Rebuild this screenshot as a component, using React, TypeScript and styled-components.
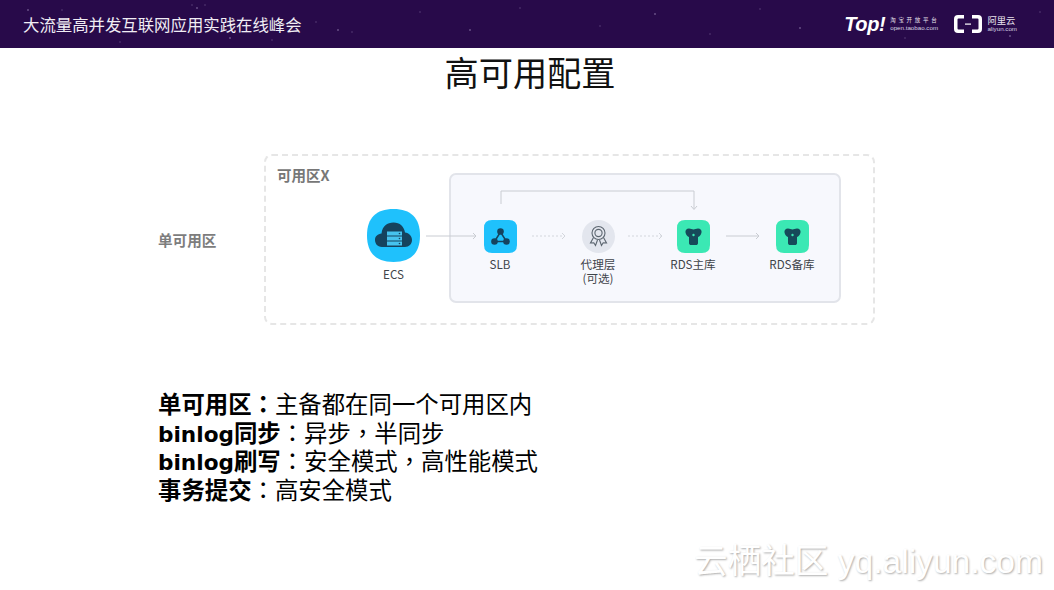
import styled, { createGlobalStyle } from 'styled-components';

const CJK = `"Noto Sans CJK SC", "Noto Sans", sans-serif`;

const GlobalStyle = createGlobalStyle`
  html, body {
    margin: 0;
    padding: 0;
    background: #fff;
  }
`;

const Slide = styled.div`
  position: relative;
  width: 1054px;
  height: 590px;
  overflow: hidden;
  background: #fff;
  font-family: ${CJK};
`;

const stars = [
  [28, 10], [62, 10], [192, 5], [197, 8], [205, 5], [316, 22], [338, 30], [352, 32],
  [170, 32], [230, 38], [272, 40], [420, 12], [470, 30], [520, 8], [600, 26], [655, 14],
  [710, 34], [760, 9], [800, 28], [120, 42], [905, 38], [1010, 36], [1040, 12],
]
  .map(([x, y], i) => `radial-gradient(circle at ${x}px ${y}px, rgba(210,195,235,${i % 3 === 0 ? 0.55 : 0.25}) 0, rgba(210,195,235,0) 1.4px)`)
  .join(', ');

const Header = styled.header`
  display: flex;
  align-items: center;
  justify-content: space-between;
  height: 48px;
  padding: 0 37px 0 23px;
  background-color: #280a4a;
  background-image: ${stars};
`;

const HeaderTitle = styled.div`
  font-size: 16.4px;
  color: #f0edf4;
  white-space: nowrap;
`;

const Logos = styled.div`
  display: flex;
  align-items: center;
  gap: 14px;
  color: #fff;
`;

const TopLogo = styled.div`
  display: flex;
  align-items: center;
  gap: 5px;
`;

const TopMark = styled.span`
  font-family: "Liberation Sans", sans-serif;
  font-style: italic;
  font-weight: 700;
  font-size: 20px;
  letter-spacing: -0.4px;
`;

const LogoCaption = styled.div`
  display: flex;
  flex-direction: column;
  white-space: nowrap;
`;

const CaptionCn = styled.span<{ $spacing?: number; $size?: number }>`
  font-size: ${p => p.$size ?? 5.5}px;
  line-height: ${p => (p.$size ?? 7) + 1}px;
  letter-spacing: ${p => p.$spacing ?? 2.7}px;
  color: #e8e4ee;
`;

const CaptionEn = styled.span<{ $size?: number }>`
  font-family: "Liberation Sans", sans-serif;
  font-size: ${p => p.$size ?? 6.2}px;
  line-height: 8px;
  color: #d8d2e2;
`;

const AliLogo = styled.div`
  display: flex;
  align-items: center;
  gap: 4px;
`;

const SlideTitle = styled.h1`
  margin: 0;
  height: 50px;
  padding-left: 6px;
  line-height: 46px;
  text-align: center;
  font-size: 34.2px;
  font-weight: 400;
  color: #111;
`;

const DiagramRow = styled.section`
  display: flex;
  align-items: center;
  margin-top: 56px;
  padding-left: 158px;
`;

const RowLabel = styled.div`
  width: 106px;
  font-size: 14.6px;
  font-weight: 700;
  color: #7d7d7d;
`;

const Zone = styled.div`
  box-sizing: border-box;
  display: flex;
  width: 611px;
  height: 171px;
  padding-top: 9px;
  border: 2px dashed #e6e6e6;
  border-radius: 8px;
`;

const ZoneSide = styled.div`
  position: relative;
  z-index: 1;
  flex: none;
  width: 172px;
  padding-left: 11px;
`;

const ZoneLabel = styled.div`
  height: 20px;
  line-height: 20px;
  font-size: 14.5px;
  font-weight: 700;
  color: #777;
`;

const EcsRow = styled.div`
  display: flex;
  align-items: flex-start;
  margin: 24px 0 0 90px;
`;

const EcsNode = styled.div`
  display: flex;
  flex-direction: column;
  align-items: center;
  width: 53px;
`;

const EcsArrow = styled.div`
  flex: none;
  display: flex;
  width: 51px;
  height: 8px;
  margin: 23px 0 0 6px;
`;

const Panel = styled.div`
  box-sizing: border-box;
  display: flex;
  align-items: flex-start;
  position: relative;
  width: 392px;
  height: 130px;
  margin-top: 8px;
  padding: 45px 0 0 19px;
  background: #f7f8fd;
  border: 2px solid #e2e4ea;
  border-radius: 7px;
`;

const Elbow = styled.svg`
  position: absolute;
  left: 49px;
  top: 15px;
`;

const Node = styled.div`
  flex: none;
  display: flex;
  flex-direction: column;
  align-items: center;
  width: 60px;
`;

const NodeLabel = styled.div`
  margin-top: 4px;
  font-size: 11.6px;
  line-height: 14px;
  color: #3f444a;
  text-align: center;
  white-space: nowrap;
`;

const EcsLabel = styled(NodeLabel)`
  margin-top: 5px;
`;

const Link = styled.div<{ $w: number }>`
  flex: none;
  display: flex;
  justify-content: center;
  width: ${p => p.$w}px;
  height: 8px;
  margin-top: 12px;
`;

const Notes = styled.section`
  margin-top: 64px;
  padding-left: 158px;
  font-size: 23.4px;
  color: #000;
`;

const NoteLine = styled.div`
  height: 28.5px;
  line-height: 28.5px;
  white-space: nowrap;
`;

const Strong = styled.strong`
  font-weight: 700;
`;

const LatinBold = styled.span`
  font-family: "DejaVu Sans", sans-serif;
  font-size: 21.6px;
  line-height: 1;
`;

const Punct = styled.span`
  font-family: "Noto Sans CJK TC", sans-serif;
  line-height: 1;
`;

const Watermark = styled.div`
  position: absolute;
  right: 11px;
  top: 541px;
  font-family: "Liberation Sans", ${CJK};
  font-size: 33.6px;
  line-height: 42px;
  color: #fff;
  text-shadow: 1px 1px 2px rgba(0, 0, 0, 0.32);
  white-space: nowrap;
`;

const tile = 'M8 0H25Q33 0 33 8V25Q33 33 25 33H8Q0 33 0 25V8Q0 0 8 0Z';

const AliMark = () => (
  <svg width="30" height="20" viewBox="0 0 30 20">
    <path d="M11 1H5Q1 1 1 5V15Q1 19 5 19H11V15.500H5.500Q4.500 15.500 4.500 14.500V5.500Q4.500 4.500 5.500 4.500H11Z" fill="#fff" />
    <path d="M19 1H25Q29 1 29 5V15Q29 19 25 19H19V15.500H24.500Q25.500 15.500 25.500 14.500V5.500Q25.500 4.500 24.500 4.500H19Z" fill="#fff" />
    <rect x="12" y="9.500" width="6" height="1.200" fill="#fff" />
  </svg>
);

const EcsIcon = () => (
  <svg width="53" height="53" viewBox="0 0 53 53">
    <path d="M26.500 0C44 0 53 9 53 26.500S44 53 26.500 53 0 44 0 26.500 9 0 26.500 0Z" fill="#1fc1fc" />
    <path d="M15 38C10 38 8 34 8 31C8 27 11 25 14.500 24.500C15.500 17 20 13.500 26.500 13.500C33 13.500 37 17.500 38 23.500C42 24 45 27 45 31C45 35 42 38 38 38Z" fill="#15435e" />
    <rect x="20" y="22.500" width="15" height="4" fill="#46c3ee" />
    <rect x="20" y="27.500" width="15" height="4" fill="#46c3ee" />
    <rect x="20" y="32.500" width="15" height="4" fill="#46c3ee" />
    <circle cx="32.500" cy="24.500" r="0.800" fill="#15435e" />
    <circle cx="32.500" cy="29.500" r="0.800" fill="#15435e" />
    <circle cx="32.500" cy="34.500" r="0.800" fill="#15435e" />
  </svg>
);

const SlbIcon = () => (
  <svg width="33" height="33" viewBox="0 0 33 33">
    <path d={tile} fill="#1fc1fc" />
    <path d="M16.500 12L10.500 21.500H22.500Z" fill="none" stroke="#15435e" strokeWidth="1.500" />
    <circle cx="16.500" cy="11.500" r="3.300" fill="#15435e" />
    <circle cx="10.500" cy="21.500" r="3.300" fill="#15435e" />
    <circle cx="22.500" cy="21.500" r="3.300" fill="#15435e" />
  </svg>
);

const ProxyIcon = () => (
  <svg width="33" height="33" viewBox="0 0 33 33">
    <circle cx="16.500" cy="16.500" r="16.500" fill="#e3e6ee" />
    <g fill="none" stroke="#5c6670" strokeWidth="1.100">
      <circle cx="16.500" cy="13" r="6.500" />
      <circle cx="16.500" cy="13" r="3.600" />
      <path d="M11.500 17.500L8.500 23L11.800 22.800L13.500 25.500L15.500 20" />
      <path d="M21.500 17.500L24.500 23L21.200 22.800L19.500 25.500L17.500 20" />
    </g>
  </svg>
);

const RdsIcon = () => (
  <svg width="33" height="33" viewBox="0 0 33 33">
    <path d={tile} fill="#3be8b4" />
    <path d="M12 8.500C14 8.500 15 9.500 16.500 9.500C18 9.500 19 8.500 21 8.500C23.500 8.500 25 10.500 24.500 12.500C24 15 22.500 16.500 21 17L21 23C21 24.500 20 25 19 25H14C13 25 12 24.500 12 23L12 17C10.500 16.500 9 15 8.500 12.500C8 10.500 9.500 8.500 12 8.500Z" fill="#164a5a" />
    <circle cx="16.500" cy="15" r="1.200" fill="#3be8b4" />
  </svg>
);

const Arrow = ({ width, dotted }: { width: number; dotted?: boolean }) => (
  <svg width={width} height="8" viewBox={`0 0 ${width} 8`}>
    <path
      d={`M0 4H${width - 1}`}
      stroke={dotted ? '#d3d6dc' : '#c9ccd2'}
      strokeWidth="1"
      strokeDasharray={dotted ? '2 2' : undefined}
    />
    <path d={`M${width - 4} 1L${width - 1} 4L${width - 4} 7`} fill="none" stroke={dotted ? '#d3d6dc' : '#c9ccd2'} strokeWidth="1" />
  </svg>
);

const App = () => (
  <Slide>
    <GlobalStyle />
    <Header>
      <HeaderTitle>大流量高并发互联网应用实践在线峰会</HeaderTitle>
      <Logos>
        <TopLogo>
          <TopMark>Top!</TopMark>
          <LogoCaption>
            <CaptionCn>淘宝开放平台</CaptionCn>
            <CaptionEn>open.taobao.com</CaptionEn>
          </LogoCaption>
        </TopLogo>
        <AliLogo>
          <AliMark />
          <LogoCaption>
            <CaptionCn $size={9.3} $spacing={0}>阿里云</CaptionCn>
            <CaptionEn $size={6.2}>aliyun.com</CaptionEn>
          </LogoCaption>
        </AliLogo>
      </Logos>
    </Header>

    <SlideTitle>高可用配置</SlideTitle>

    <DiagramRow>
      <RowLabel>单可用区</RowLabel>
      <Zone>
        <ZoneSide>
          <ZoneLabel>可用区X</ZoneLabel>
          <EcsRow>
            <EcsNode>
              <EcsIcon />
              <EcsLabel>ECS</EcsLabel>
            </EcsNode>
            <EcsArrow>
              <Arrow width={51} />
            </EcsArrow>
          </EcsRow>
        </ZoneSide>
        <Panel>
          <Elbow width="198" height="24" viewBox="0 0 198 24">
            <path d="M1 14V1H194V19" fill="none" stroke="#c9ccd2" strokeWidth="1" />
            <path d="M191 16L194 19.500L197 16" fill="none" stroke="#c9ccd2" strokeWidth="1" />
          </Elbow>
          <Node>
            <SlbIcon />
            <NodeLabel>SLB</NodeLabel>
          </Node>
          <Link $w={38}><Arrow width={34} dotted /></Link>
          <Node>
            <ProxyIcon />
            <NodeLabel>代理层<br />(可选)</NodeLabel>
          </Node>
          <Link $w={35}><Arrow width={35} dotted /></Link>
          <Node>
            <RdsIcon />
            <NodeLabel>RDS主库</NodeLabel>
          </Node>
          <Link $w={39}><Arrow width={34} /></Link>
          <Node>
            <RdsIcon />
            <NodeLabel>RDS备库</NodeLabel>
          </Node>
        </Panel>
      </Zone>
    </DiagramRow>

    <Notes>
      <NoteLine><Strong>单可用区<Punct>：</Punct></Strong>主备都在同一个可用区内</NoteLine>
      <NoteLine><Strong><LatinBold>binlog</LatinBold>同步</Strong><Punct>：</Punct>异步<Punct>，</Punct>半同步</NoteLine>
      <NoteLine><Strong><LatinBold>binlog</LatinBold>刷写</Strong><Punct>：</Punct>安全模式<Punct>，</Punct>高性能模式</NoteLine>
      <NoteLine><Strong>事务提交</Strong><Punct>：</Punct>高安全模式</NoteLine>
    </Notes>

    <Watermark>云栖社区 yq.aliyun.com</Watermark>
  </Slide>
);

export default App;
